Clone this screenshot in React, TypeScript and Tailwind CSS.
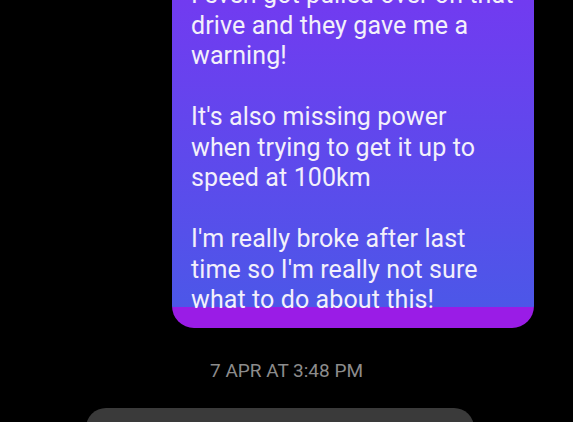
import React from "react";

const lines = [
  ["I even got pulled over on that", "drive and they gave me a", "warning!"],
  ["It's also missing power", "when trying to get it up to", "speed at 100km"],
  ["I'm really broke after last", "time so I'm really not sure", "what to do about this!"],
];

export default function App() {
  return (
    <div className="h-[422px] w-[573px] overflow-hidden bg-black font-['Roboto',sans-serif]">
      <div className="flex justify-end pr-[39px]">
        <div className="-mt-[30px] w-[362px] rounded-[22px] bg-[linear-gradient(to_bottom,#7538f1_0%,#4c57e8_calc(100%-21px),#9a1ce6_calc(100%-21px),#9a1ce6_100%)] pl-[19px] pt-[10px] pb-[12px] text-[25px] leading-[30.5px] tracking-[0.1px] text-[#f3f0fb]">
          {lines.map((para, i) => (
            <div key={i} className={i > 0 ? "mt-[30.5px]" : ""}>
              {para.map((l) => (
                <div key={l} className="whitespace-nowrap">
                  {l}
                </div>
              ))}
            </div>
          ))}
        </div>
      </div>

      <div className="mt-[31px] text-center text-[19px] leading-[24px] text-[#8c8c8c]">
        7 APR AT 3:48 PM
      </div>

      <div className="ml-[86px] mt-[25px] h-[40px] w-[388px] rounded-[22px] bg-[#3a3a3a]" />
    </div>
  );
}
